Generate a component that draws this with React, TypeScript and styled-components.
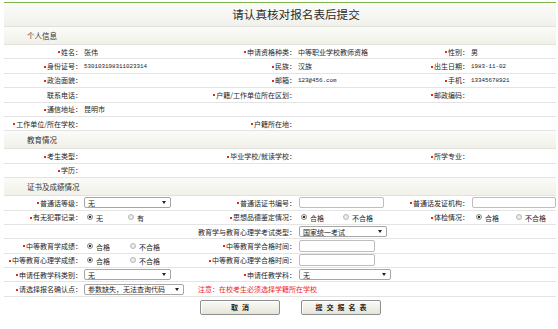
import React from "react";
import styled, { createGlobalStyle, css } from "styled-components";

const GlobalStyle = createGlobalStyle`
  html, body { margin: 0; padding: 0; background: #fff; }
  body {
    font-family: "Noto Sans CJK SC", "Noto Sans", sans-serif;
    font-size: 7px;
    color: #222;
  }
`;

const Page = styled.div`
  padding: 2px 2px 0 4px;
  width: 552px;
`;

const Frame = styled.div`
  border-top: 1px solid #7cb547;
`;

const TitleBar = styled.div`
  height: 23px;
  line-height: 23px;
  border-bottom: 1px solid #e2e2dc;
  background: linear-gradient(#fbfbf9, #f1f1ec);
  font-size: 11.6px;
  color: #2a2a2a;
  text-align: center;
  padding-left: 32px;
`;

const Section = styled.div`
  height: 17px;
  display: flex;
  align-items: center;
  padding-left: 23px;
  border-bottom: 1px solid #e2e2dc;
  background: linear-gradient(#fbfbf8, #f1f1ea);
  font-size: 7.5px;
  color: #333;
`;

const Row = styled.div`
  display: grid;
  grid-template-columns: 78px 118px 96px 88px 85px 87px;
  align-items: center;
  height: 14.4px;
  box-sizing: border-box;
  border-bottom: 1px solid #e4e4e4;
  background: #fff;
`;

const Label = styled.div<{ $req?: boolean }>`
  display: flex;
  justify-content: flex-end;
  align-items: center;
  white-space: nowrap;
  min-width: 0;
  color: #1e1e1e;
  ${(p) =>
    p.$req &&
    css`
      &::before {
        content: "";
        width: 2px;
        height: 2px;
        background: #e8261c;
        margin-right: 1px;
        margin-top: 1px;
      }
    `}
`;

const Value = styled.div<{ $span?: number; $pad?: number }>`
  grid-column: span ${(p) => p.$span ?? 1};
  display: flex;
  align-items: center;
  padding-left: ${(p) => p.$pad ?? 2}px;
  white-space: nowrap;
  min-width: 0;
  color: #1e1e1e;
`;

const Mono = styled.span`
  font-family: "Liberation Mono", monospace;
  font-size: 5.85px;
  color: #222;
`;

const SelectBox = styled.div<{ $w: number }>`
  width: ${(p) => p.$w}px;
  height: 11px;
  box-sizing: border-box;
  border: 1px solid #a6a6a6;
  border-radius: 2px;
  background: #fff;
  display: flex;
  align-items: center;
  justify-content: space-between;
  padding: 0 4px 0 3px;
  font-size: 7px;
  color: #1a1a1a;
`;

const Arrow = styled.span`
  width: 0;
  height: 0;
  border-left: 2px solid transparent;
  border-right: 2px solid transparent;
  border-top: 3px solid #222;
`;

const TextInput = styled.div<{ $w: number; $h?: number }>`
  width: ${(p) => p.$w}px;
  height: ${(p) => p.$h ?? 11}px;
  box-sizing: border-box;
  border: 1px solid #bdbdbd;
  border-radius: 2px;
  background: #fff;
`;

const Option = styled.label<{ $w: number }>`
  display: inline-flex;
  align-items: center;
  width: ${(p) => p.$w}px;
  color: #1e1e1e;
`;

const RadioDot = styled.span<{ $on?: boolean }>`
  width: 6px;
  height: 6px;
  margin: 0 3px 0 3px;
  box-sizing: border-box;
  border-radius: 50%;
  border: 1px solid ${(p) => (p.$on ? "#8a8a8a" : "#b8b8b8")};
  background: radial-gradient(circle, ${(p) => (p.$on ? "#333 0 1.2px, #e8e8e8 1.4px" : "#f4f4f4 0, #dcdcdc 100%")});
`;

const OptText = styled.span`
  margin-top: 2px;
`;

const Note = styled.span`
  color: #f21d1d;
  margin-left: 14px;
`;

const ButtonBar = styled.div`
  display: flex;
  justify-content: center;
  gap: 21px;
  padding: 3px 0 0 21px;
`;

const Button = styled.button`
  width: 80px;
  height: 15px;
  padding: 0 0 0 4px;
  box-sizing: border-box;
  border: 1px solid #8e8e8e;
  border-radius: 2px;
  background: linear-gradient(#fbfbf7, #e4e4da);
  box-shadow: inset 1px 1px 0 #fff;
  font-family: "Noto Sans CJK SC", sans-serif;
  font-size: 7px;
  font-weight: 700;
  letter-spacing: 4px;
  color: #222;
`;

const Radio = ({ on, text, w }: { on?: boolean; text: string; w: number }) => (
  <Option $w={w}>
    <RadioDot $on={on} />
    <OptText>{text}</OptText>
  </Option>
);

export default function App() {
  return (
    <>
      <GlobalStyle />
      <Page>
        <Frame>
          <TitleBar>请认真核对报名表后提交</TitleBar>
          <Section>个人信息</Section>
          <Row>
            <Label $req>姓名：</Label>
            <Value>张伟</Value>
            <Label $req>申请资格种类：</Label>
            <Value>中等职业学校教师资格</Value>
            <Label $req>性别：</Label>
            <Value>男</Value>
          </Row>
          <Row>
            <Label $req>身份证号：</Label>
            <Value><Mono>530103198311023314</Mono></Value>
            <Label $req>民族：</Label>
            <Value>汉族</Value>
            <Label $req>出生日期：</Label>
            <Value><Mono>1983-11-02</Mono></Value>
          </Row>
          <Row>
            <Label $req>政治面貌：</Label>
            <Value />
            <Label $req>邮箱：</Label>
            <Value><Mono>123@456.com</Mono></Value>
            <Label $req>手机：</Label>
            <Value><Mono>13345678921</Mono></Value>
          </Row>
          <Row>
            <Label>联系电话：</Label>
            <Value />
            <Label $req>户籍/工作单位所在区划：</Label>
            <Value />
            <Label $req>邮政编码：</Label>
            <Value />
          </Row>
          <Row>
            <Label $req>通信地址：</Label>
            <Value $span={5}>昆明市</Value>
          </Row>
          <Row>
            <Label $req>工作单位/所在学校：</Label>
            <Value />
            <Label $req>户籍所在地：</Label>
            <Value $span={3} />
          </Row>
          <Section>教育情况</Section>
          <Row>
            <Label $req>考生类型：</Label>
            <Value />
            <Label $req>毕业学校/就读学校：</Label>
            <Value />
            <Label $req>所学专业：</Label>
            <Value />
          </Row>
          <Row>
            <Label $req>学历：</Label>
            <Value $span={5} />
          </Row>
          <Section>证书及成绩情况</Section>
          <Row>
            <Label $req>普通话等级：</Label>
            <Value>
              <SelectBox $w={87}>无<Arrow /></SelectBox>
            </Value>
            <Label $req>普通话证书编号：</Label>
            <Value $pad={3}>
              <TextInput $w={87} />
            </Value>
            <Label $req>普通话发证机构：</Label>
            <Value $pad={3}>
              <TextInput $w={84} />
            </Value>
          </Row>
          <Row>
            <Label $req>有无犯罪记录：</Label>
            <Value>
              <Radio on text="无" w={41} />
              <Radio text="有" w={30} />
            </Value>
            <Label $req>思想品德鉴定情况：</Label>
            <Value>
              <Radio on text="合格" w={42} />
              <Radio text="不合格" w={44} />
            </Value>
            <Label $req>体检情况：</Label>
            <Value $pad={4}>
              <Radio on text="合格" w={40} />
              <Radio text="不合格" w={40} />
            </Value>
          </Row>
          <Row>
            <Label />
            <Value />
            <Label $req>教育学与教育心理学考试类型：</Label>
            <Value $span={3} $pad={3}>
              <SelectBox $w={88}>国家统一考试<Arrow /></SelectBox>
            </Value>
          </Row>
          <Row>
            <Label $req>中等教育学成绩：</Label>
            <Value>
              <Radio on text="合格" w={43} />
              <Radio text="不合格" w={44} />
            </Value>
            <Label $req>中等教育学合格时间：</Label>
            <Value $span={3} $pad={3}>
              <TextInput $w={76} $h={12} />
            </Value>
          </Row>
          <Row>
            <Label $req>中等教育心理学成绩：</Label>
            <Value>
              <Radio on text="合格" w={43} />
              <Radio text="不合格" w={44} />
            </Value>
            <Label $req>中等教育心理学合格时间：</Label>
            <Value $span={3} $pad={3}>
              <TextInput $w={76} $h={12} />
            </Value>
          </Row>
          <Row>
            <Label $req>申请任教学科类别：</Label>
            <Value>
              <SelectBox $w={87}>无<Arrow /></SelectBox>
            </Value>
            <Label $req>申请任教学科：</Label>
            <Value $span={3} $pad={3}>
              <SelectBox $w={92}>无<Arrow /></SelectBox>
            </Value>
          </Row>
          <Row>
            <Label $req>请选择报名确认点：</Label>
            <Value $span={5}>
              <SelectBox $w={100}>参数缺失，无法查询代码<Arrow /></SelectBox>
              <Note>注意：在校考生必须选择学籍所在学校</Note>
            </Value>
          </Row>
          <ButtonBar>
            <Button type="button">取消</Button>
            <Button type="button">提交报名表</Button>
          </ButtonBar>
        </Frame>
      </Page>
    </>
  );
}
